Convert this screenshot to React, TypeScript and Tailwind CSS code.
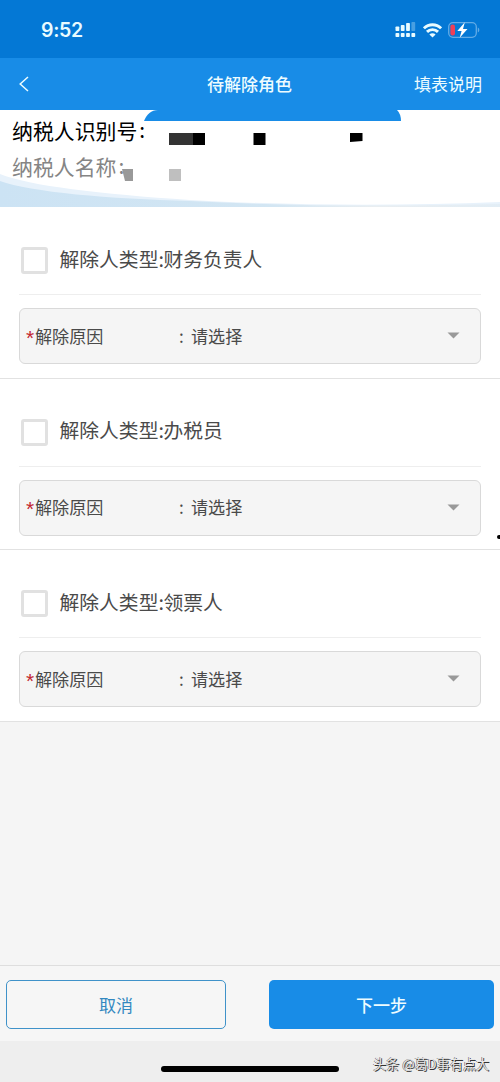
import React, { useState } from "react";

const roles = [
  { id: "finance", name: "财务负责人" },
  { id: "tax", name: "办税员" },
  { id: "invoice", name: "领票人" },
];

function StatusBar() {
  return (
    <div className="flex h-[58px] items-center justify-between bg-[#0478d5] pr-[20px] pl-[41px] pt-[2px] text-white">
      <span className="font-['Inter'] text-[19.5px] leading-6 font-semibold tracking-[-0.3px] text-[#e8fbff]">
        9:52
      </span>
      <div className="flex items-center gap-[6px]">
        {/* Dual SIM signal */}
        <svg className="-ml-px mr-px" width="21" height="16" viewBox="0 0 21 16" fill="#e8fbff">
          <rect x="0.5" y="4.5" width="3.8" height="4.5" rx="0.8" />
          <rect x="5.8" y="3" width="3.8" height="6" rx="0.8" />
          <rect x="11.1" y="1" width="3.8" height="8" rx="0.8" />
          <rect x="16.4" y="0" width="3.8" height="9" rx="0.8" opacity="0.3" />
          <rect x="0.5" y="11" width="3.8" height="4" rx="0.8" />
          <rect x="5.8" y="11" width="3.8" height="4" rx="0.8" />
          <rect x="11.1" y="11" width="3.8" height="4" rx="0.8" />
          <rect x="16.4" y="11" width="3.8" height="4" rx="0.8" />
        </svg>
        {/* Wi-Fi */}
        <svg width="19" height="15" viewBox="0 0 19 15" fill="none" stroke="#e8fbff" strokeWidth="2.9">
          <path d="M0.9 5.3A12.2 12.2 0 0 1 18.1 5.3" />
          <path d="M4 8.9A7.8 7.8 0 0 1 15 8.9" />
          <path d="M9.5 14.5L6.4 11.5A4.4 4.4 0 0 1 12.6 11.5Z" fill="#e8fbff" stroke="none" />
        </svg>
        {/* Battery, charging */}
        <svg width="32" height="16" viewBox="0 0 32 16">
          <rect x="0.7" y="0.7" width="27.6" height="14.6" rx="4.2" fill="none" stroke="#62abe6" strokeWidth="1.3" />
          <path d="M29.8 5.5v5c2-.8 2-4.2 0-5Z" fill="#62abe6" />
          <rect x="2.4" y="2.4" width="4.6" height="11.2" rx="2" fill="#ee3f58" />
          <path d="M16.8 0.2L9.3 8.9h4.3l-1.9 6.9 7.8-8.9h-4.5Z" fill="#fff" />
        </svg>
      </div>
    </div>
  );
}

function NavBar() {
  return (
    <div className="grid h-[52px] grid-cols-[1fr_auto_1fr] items-center bg-[#188ce7] pr-[18px] pl-[18px] text-[17px] text-[#edfcff]">
      <button type="button" className="w-3">
        <svg width="12" height="16" viewBox="0 0 12 16" fill="none" stroke="#edfcff" strokeWidth="1.5">
          <path d="M10 1L2.2 8L10 15" />
        </svg>
      </button>
      <h1 className="-ml-px font-medium">待解除角色</h1>
      <button type="button" className="text-right">
        填表说明
      </button>
    </div>
  );
}

function TaxpayerHeader() {
  return (
    <div className="relative h-[97px] bg-white pl-3 text-[20.9px] leading-9">
      <svg className="absolute top-0 left-0" width="500" height="97" viewBox="0 0 500 97">
        <defs>
          <linearGradient id="wave" x1="0" x2="1" y1="0" y2="0">
            <stop offset="0" stopColor="#cce3f4" />
            <stop offset="0.55" stopColor="#d3e6f3" />
            <stop offset="0.75" stopColor="#e9eef1" />
            <stop offset="1" stopColor="#e2edf5" />
          </linearGradient>
        </defs>
        <path d="M0 64C30 76 100 84 190 90C300 96 400 96 500 92V97H0Z" fill="#e8f2fb" />
        <path d="M0 71C30 82 110 89 190 91C300 97 420 96 500 94V97H0Z" fill="url(#wave)" />
        {/* Redacted values */}
        <path d="M144 11C147 4 151 0 158 0H397Q401 4 401 11Z" fill="#188ce7" />
        <rect x="169" y="23" width="24" height="12" fill="#333" />
        <rect x="193" y="23" width="12" height="12" fill="#000" />
        <rect x="253.500" y="23" width="12" height="12" fill="#000" />
        <path d="M350 23H362.500V31L350 32Z" fill="#000" />
        <path d="M122 59H133V71H125Z" fill="#999" />
        <rect x="169" y="59" width="12" height="12" fill="#bfbfbf" />
      </svg>
      <div className="relative flex pt-[2px] text-black">
        <span>纳税人识别号</span>
        <span className="-mt-px ml-[2px]">:</span>
      </div>
      <div className="relative flex text-[#858585]">
        <span>纳税人名称</span>
        <span className="-mt-px ml-[2px]">:</span>
      </div>
    </div>
  );
}

function RoleItem({ name, checked, onToggle }: { name: string; checked: boolean; onToggle: () => void }) {
  return (
    <section className="h-[171.5px] border-b border-[#e2e2e2] bg-white px-[19px]">
      <label className="flex h-[88px] items-center border-b border-[#eee] pt-[20px] text-[19.8px] text-[#4a4a4a]">
        <input
          type="checkbox"
          checked={checked}
          onChange={onToggle}
          className="mr-[12px] ml-[1.500px] size-[27px] appearance-none rounded-[3px] border-[3px] border-[#e1e1e1] bg-white checked:bg-[#188ce7]"
        />
        <span className="-mt-[4px] whitespace-nowrap">
          解除人类型<span className="-mr-[0.5px]">:</span>
          {name}
        </span>
      </label>
      <button
        type="button"
        className="mt-[13px] flex h-[56px] w-full items-center rounded-md border border-[#d9d9d9] bg-[#f5f5f5] pr-[20px] pb-px pl-[6px] text-[17.1px] text-[#4a4a4a]"
      >
        <span className="w-[9px] text-left font-['Liberation_Sans'] text-[21px] leading-6 text-[#c32530]">
          <span className="relative top-[2px]">*</span>
        </span>
        <span className="w-[144px] text-left">解除原因</span>
        <span className="w-[12px] text-left">:</span>
        <span>请选择</span>
        <svg className="ml-auto" width="13" height="7" viewBox="0 0 13 7" fill="#999">
          <path d="M0.500 0.500H12.500L6.500 6.500Z" />
        </svg>
      </button>
    </section>
  );
}

export default function App() {
  const [selected, setSelected] = useState<string[]>([]);

  const toggle = (id: string) => {
    setSelected((prev) => (prev.includes(id) ? prev.filter((item) => item !== id) : [...prev, id]));
  };

  return (
    <div className="relative flex h-[1082px] w-[500px] flex-col overflow-hidden bg-[#f5f5f5] font-['Noto_Sans_CJK_SC',sans-serif]">
      <StatusBar />
      <NavBar />
      <TaxpayerHeader />
      <main className="flex-1">
        {roles.map((role) => (
          <RoleItem
            key={role.id}
            name={role.name}
            checked={selected.includes(role.id)}
            onToggle={() => toggle(role.id)}
          />
        ))}
      </main>

      <div className="flex h-[76px] justify-between border-t border-[#dedede] bg-[#f6f6f6] px-[6px] pt-[14px] text-[17px]">
        <button
          type="button"
          className="h-[49px] w-[220px] rounded-[5px] border-[1.5px] border-[#3f92c9] text-[#3388c0]"
        >
          取消
        </button>
        <button type="button" className="h-[49px] w-[225px] rounded-[5px] bg-[#188ce7] font-medium text-[#edfcff]">
          下一步
        </button>
      </div>
      <footer className="flex h-[41px] items-start justify-between bg-[#eee] pr-[11px] pl-[161px]">
        <div className="mt-[25px] h-[6px] w-[178px] rounded-full bg-black" />
        <span className="mt-[11px] text-[13.100px] leading-6 whitespace-nowrap text-[#e8e8e8] [text-shadow:1px_1px_0_#333,-0.5px_-0.5px_0_#555]">
          头条 @葛D事有点大
        </span>
      </footer>

      {/* Edge handle of the floating assistive button */}
      <div className="absolute top-[535px] right-0 h-1 w-[3px] rounded-l-full bg-black" />
    </div>
  );
}
